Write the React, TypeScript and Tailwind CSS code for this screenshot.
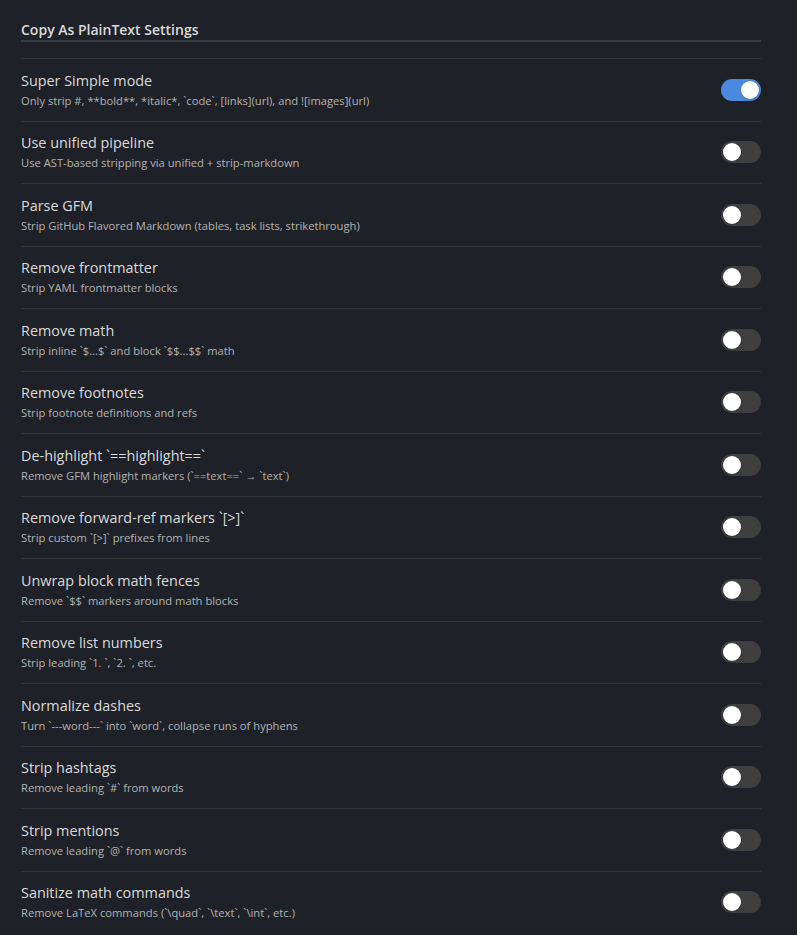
import { useState } from "react";

type Setting = {
  name: string;
  desc: string;
  on?: boolean;
};

const settings: Setting[] = [
  {
    name: "Super Simple mode",
    desc: "Only strip #, **bold**, *italic*, `code`, [links](url), and ![images](url)",
    on: true,
  },
  { name: "Use unified pipeline", desc: "Use AST-based stripping via unified + strip-markdown" },
  { name: "Parse GFM", desc: "Strip GitHub Flavored Markdown (tables, task lists, strikethrough)" },
  { name: "Remove frontmatter", desc: "Strip YAML frontmatter blocks" },
  { name: "Remove math", desc: "Strip inline `$...$` and block `$$...$$` math" },
  { name: "Remove footnotes", desc: "Strip footnote definitions and refs" },
  {
    name: "De-highlight `==highlight==`",
    desc: "Remove GFM highlight markers (`==text==` → `text`)",
  },
  { name: "Remove forward-ref markers `[>]`", desc: "Strip custom `[>]` prefixes from lines" },
  { name: "Unwrap block math fences", desc: "Remove `$$` markers around math blocks" },
  { name: "Remove list numbers", desc: "Strip leading `1. `, `2. `, etc." },
  { name: "Normalize dashes", desc: "Turn `---word---` into `word`, collapse runs of hyphens" },
  { name: "Strip hashtags", desc: "Remove leading `#` from words" },
  { name: "Strip mentions", desc: "Remove leading `@` from words" },
  {
    name: "Sanitize math commands",
    desc: "Remove LaTeX commands (`\\quad`, `\\text`, `\\int`, etc.)",
  },
];

function Toggle({ on, onChange }: { on: boolean; onChange: () => void }) {
  return (
    <button
      type="button"
      onClick={onChange}
      className={`flex h-[22px] w-[40px] shrink-0 items-center rounded-full px-[2px] transition ${
        on ? "justify-end bg-[#4a89df]" : "justify-start bg-[#3f3f3f]"
      }`}
    >
      <span className="block h-[18px] w-[18px] rounded-full bg-white shadow-sm" />
    </button>
  );
}

export default function App() {
  const [values, setValues] = useState(settings.map((s) => !!s.on));

  return (
    <div
      className="min-h-screen bg-[#1e2127] pl-[21px] pt-[20px] text-[#dadada]"
      style={{ fontFamily: '"Open Sans", "Noto Sans", sans-serif' }}
    >
      <div className="w-[740px]">
        <h2 className="border-b-2 border-[#393c41] text-[14px] font-semibold leading-[20px] text-[#dadada]">
          Copy As PlainText Settings
        </h2>

        <div className="mt-[16px]">
          {settings.map((setting, i) => (
            <div
              key={setting.name}
              className="flex h-[62.5px] items-center justify-between gap-4 border-t border-[#32353a]"
            >
              <div className="min-w-0">
                <div className="text-[14.4px] leading-[19px] text-[#dadada]">{setting.name}</div>
                <div className="mt-[3px] text-[11.2px] leading-[16px] text-[#b3b3b3]">
                  {setting.desc}
                </div>
              </div>
              <Toggle
                on={values[i]}
                onChange={() =>
                  setValues((prev) => prev.map((v, j) => (j === i ? !v : v)))
                }
              />
            </div>
          ))}
        </div>
      </div>
    </div>
  );
}
